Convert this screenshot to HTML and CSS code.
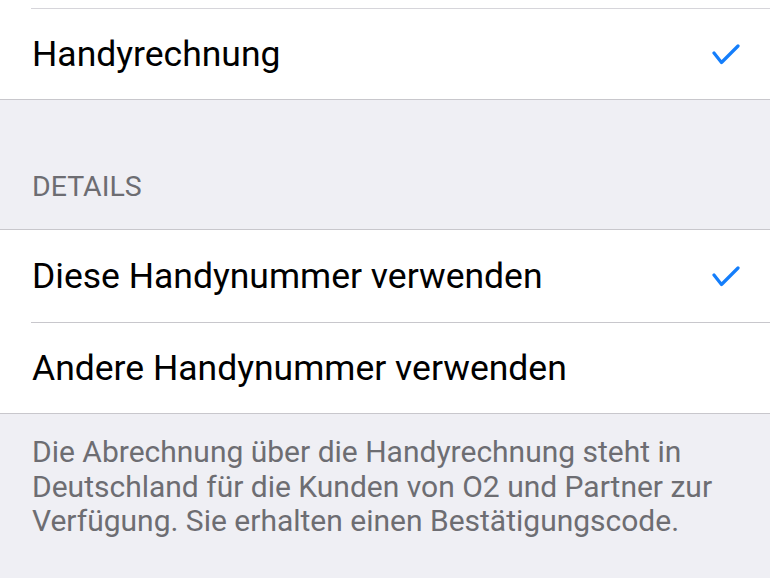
FILE: index.html
```html
<!DOCTYPE html>
<html>
<head>
<meta charset="utf-8">
<link rel="stylesheet" href="styles.css">
</head>
<body>
<div class="screen">
  <div class="group group-top">
    <div class="row">
      <span class="label">Handyrechnung</span>
      <svg class="check" width="28" height="22" viewBox="0 0 28 22"><path d="M2 9 L9.5 18.5 L26 2" fill="none" stroke="#147efb" stroke-width="3.2" stroke-linecap="round" stroke-linejoin="round"/></svg>
    </div>
  </div>
  <div class="header">DETAILS</div>
  <div class="group">
    <div class="row">
      <span class="label">Diese Handynummer verwenden</span>
      <svg class="check" width="28" height="22" viewBox="0 0 28 22"><path d="M2 9 L9.5 18.5 L26 2" fill="none" stroke="#147efb" stroke-width="3.2" stroke-linecap="round" stroke-linejoin="round"/></svg>
    </div>
    <div class="row">
      <span class="label">Andere Handynummer verwenden</span>
    </div>
  </div>
  <div class="footer">Die Abrechnung über die Handyrechnung steht in Deutschland für die Kunden von O2 und Partner zur Verfügung. Sie erhalten einen Bestätigungscode.</div>
</div>
</body>
</html>
```
FILE: styles.css
```css
html, body {
  margin: 0;
  padding: 0;
  background: #efeff4;
}
.screen {
  width: 770px;
  height: 578px;
  overflow: hidden;
  font-family: Roboto, "Liberation Sans", sans-serif;
}
.group {
  background: #ffffff;
  border-top: 1px solid #c8c7cc;
  border-bottom: 1px solid #c8c7cc;
}
.group-top {
  border-top: none;
  padding-top: 8px;
}
.row {
  display: flex;
  align-items: center;
  justify-content: space-between;
  height: 91px;
  margin-left: 31px;
  padding-right: 30px;
  border-top: 1px solid #c8c7cc;
  box-sizing: border-box;
}
.group-top .row {
  border-top-color: #d6d5da;
}
.group:not(.group-top) .row:first-child {
  border-top: none;
  height: 92px;
}
.label {
  font-size: 35.5px;
  line-height: 40px;
  color: #000;
  padding-left: 1px;
}
.check {
  display: block;
  margin-top: 2px;
}
.header {
  height: 129px;
  box-sizing: border-box;
  padding: 73px 0 0 32px;
  font-size: 28.5px;
  line-height: 28px;
  color: #6d6d72;
}
.footer {
  padding: 21px 40px 0 32px;
  font-size: 30px;
  line-height: 34.5px;
  color: #6d6d72;
}
```
